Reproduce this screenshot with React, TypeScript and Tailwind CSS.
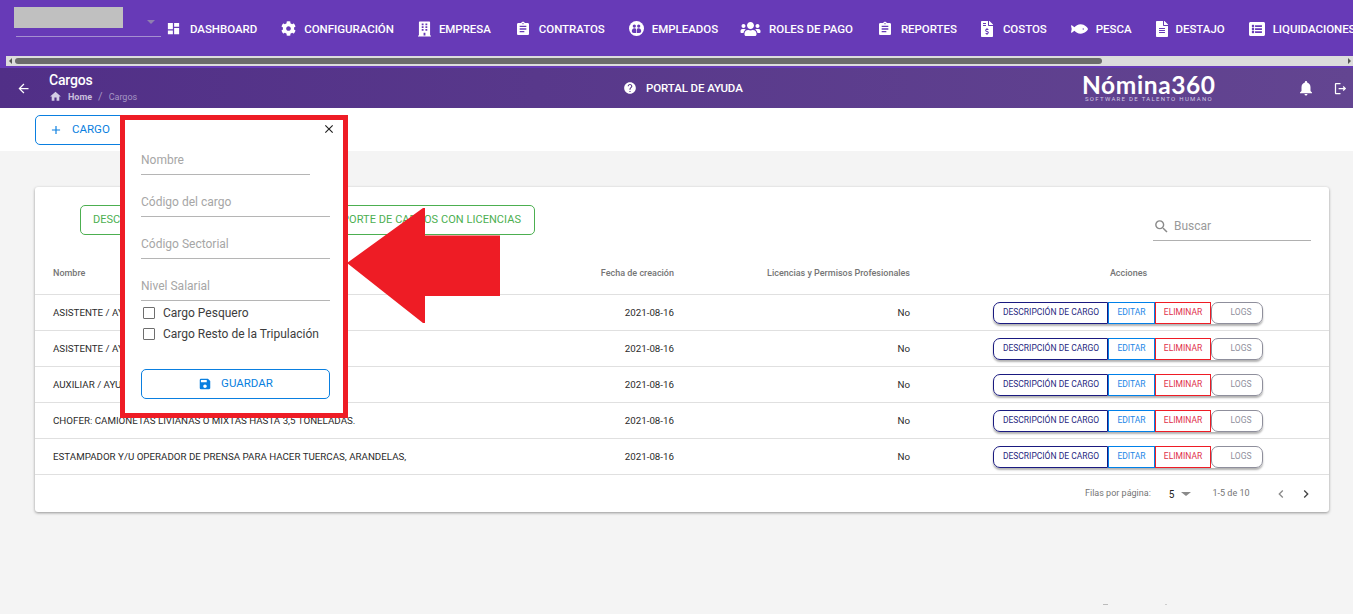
import { FaBuilding, FaCog, FaFileInvoiceDollar, FaFish, FaUsers, FaFileAlt, FaListAlt } from "react-icons/fa";
import {
  MdAdd,
  MdArrowBack,
  MdAssignment,
  MdChevronLeft,
  MdChevronRight,
  MdClose,
  MdDashboard,
  MdHelp,
  MdHome,
  MdNotifications,
  MdOutlineLogout,
  MdSave,
  MdSearch,
} from "react-icons/md";

function PeopleCircle() {
  return (
    <svg className="h-[15px] w-[15px]" viewBox="0 0 24 24">
      <circle cx="12" cy="12" r="12" fill="#fff" />
      <circle cx="8.5" cy="8" r="2.6" fill="#673ab7" />
      <circle cx="15.5" cy="8" r="2.6" fill="#673ab7" />
      <path d="M4.5 16c0-3 1.8-4.6 4-4.6s3 1 3 3V19H7.5C5.5 19 4.5 18 4.5 16z" fill="#673ab7" />
      <path d="M19.5 16c0-3-1.8-4.6-4-4.6s-3 1-3 3V19h4c2 0 3-1 3-3z" fill="#673ab7" />
    </svg>
  );
}

const navItems = [
  { label: "DASHBOARD", icon: <MdDashboard className="h-[15px] w-[15px]" />, gap: "mr-[9px]" },
  { label: "CONFIGURACIÓN", icon: <FaCog className="h-[15px] w-[15px]" />, gap: "mr-2" },
  { label: "EMPRESA", icon: <FaBuilding className="h-[16px] w-[13px]" />, gap: "mr-2" },
  { label: "CONTRATOS", icon: <MdAssignment className="h-[16px] w-[16px]" />, gap: "mr-2" },
  { label: "EMPLEADOS", icon: <PeopleCircle />, gap: "mr-2" },
  { label: "ROLES DE PAGO", icon: <FaUsers className="h-[16px] w-[21px]" />, gap: "-ml-[2px] mr-2" },
  { label: "REPORTES", icon: <MdAssignment className="h-[16px] w-[16px]" />, gap: "mr-2" },
  { label: "COSTOS", icon: <FaFileInvoiceDollar className="h-[16px] w-[12px]" />, gap: "mr-[10px]" },
  { label: "PESCA", icon: <FaFish className="h-[16px] w-[17px]" />, gap: "mr-2" },
  { label: "DESTAJO", icon: <FaFileAlt className="h-[16px] w-[12px]" />, gap: "mr-2" },
  { label: "LIQUIDACIONES", icon: <FaListAlt className="h-[16px] w-[16px]" />, gap: "mr-2" },
];

const rows = [
  "ASISTENTE / AYUDANTE DE COCINA",
  "ASISTENTE / AYUDANTE DE OFICINA",
  "AUXILIAR / AYUDANTE DE TALLER QUE NO REQUIEREN",
  "CHOFER: CAMIONETAS LIVIANAS O MIXTAS HASTA 3,5 TONELADAS.",
  "ESTAMPADOR Y/U OPERADOR DE PRENSA PARA HACER TUERCAS, ARANDELAS,",
];

function Field({ label, short }: { label: string; short?: boolean }) {
  return (
    <div
      className={`flex h-[42px] items-end border-b border-[#b5b5b5] pb-[5px] text-[12px] text-[#a6a6a6] ${
        short ? "w-[169px]" : "w-[189px]"
      }`}
    >
      {label}
    </div>
  );
}

function Check({ label }: { label: string }) {
  return (
    <div className="flex h-[21px] items-center pb-[1px] text-[12px] text-[#3d3d3d]">
      <span className="ml-[2px] mr-[8px] h-[12px] w-[12px] rounded-[1px] border border-[#6e6e6e]" />
      {label}
    </div>
  );
}

function ActionButtons() {
  return (
    <div className="flex h-[22px] rounded-[7px] text-[8.5px] shadow-[0_2px_2px_rgba(0,0,0,0.3)]">
      <span className="flex w-[115px] items-center justify-center rounded-l-[7px] border border-[#1a1a80] pl-[1px] text-[#1f1f80]">
        DESCRIPCIÓN DE CARGO
      </span>
      <span className="flex w-[47px] items-center justify-center border border-[#0080e8] text-[#1c86e6]">EDITAR</span>
      <span className="flex w-[56px] items-center justify-center border border-[#ee1c25] text-[#e0304a]">ELIMINAR</span>
      <span className="flex w-[52px] items-center justify-center rounded-[7px] border border-[#8f8f9c] bg-white pl-[8px] text-[#8f8f9c]">
        LOGS
      </span>
    </div>
  );
}

export default function App() {
  return (
    <div className="relative h-[614px] w-[1353px] overflow-hidden bg-[#f4f4f4] font-['Roboto',sans-serif]">
      {/* top nav */}
      <div className="h-[68px] bg-[#673ab7]">
        <div className="flex h-[56px] items-start overflow-hidden">
          <div className="relative h-[56px] w-[166px] flex-none">
            <div className="absolute left-[14px] top-[7px] h-[21px] w-[109px] bg-[#c0c0c0]" />
            <div className="absolute left-[147px] top-[20px] h-0 w-0 border-x-[4px] border-t-[4px] border-x-transparent border-t-[#8f7fb0]" />
            <div className="absolute left-[16px] top-[36px] h-px w-[145px] bg-[#a58fd0]" />
          </div>
          <div className="flex h-[56px] flex-none items-center gap-[24px] pt-[1px] text-[11.5px] font-medium text-white">
            {navItems.map((item) => (
              <div key={item.label} className="flex items-center whitespace-nowrap tracking-[-0.04px]">
                <span className={`flex items-center ${item.gap}`}>{item.icon}</span>
                <span className="pt-[2px]">{item.label}</span>
              </div>
            ))}
          </div>
        </div>
        <div className="ml-[6px] flex h-[10px] items-center bg-[#dcdcdc]">
          <div className="ml-[3px] h-0 w-0 border-y-[3px] border-r-[3px] border-y-transparent border-r-[#555]" />
          <div className="ml-[3px] h-[6px] w-[1087px] rounded-full bg-[#6b6b6b]" />
          <div className="ml-auto mr-[2px] h-0 w-0 border-y-[3px] border-l-[3px] border-y-transparent border-l-[#555]" />
        </div>
      </div>

      {/* page header */}
      <div className="flex h-[40px] items-center bg-gradient-to-r from-[#512f87] to-[#634591] text-white">
        <MdArrowBack className="ml-[16px] h-[15px] w-[15px]" />
        <div className="ml-[18px] w-[574px]">
          <div className="text-[14px] font-medium leading-[15px] tracking-[-0.2px]">Cargos</div>
          <div className="flex items-center pt-[2px] text-[9px] leading-[12px] text-[#a596c4]">
            <MdHome className="mr-[6px] h-[13px] w-[13px] text-[#d5cce5]" />
            <span className="font-bold text-[#c9bfdc]">Home</span>
            <span className="mx-[6px] text-[11px]">/</span>
            <span>Cargos</span>
          </div>
        </div>
        <MdHelp className="h-[14px] w-[14px]" />
        <span className="ml-[9px] w-[436px] pt-[2px] text-[11.5px] font-medium tracking-[-0.1px]">PORTAL DE AYUDA</span>
        <div className="flex w-[215px] flex-col items-start">
          <span className="font-['Lato',sans-serif] text-[24.5px] font-bold leading-[21px] tracking-[0.6px]">Nómina360</span>
          <span className="ml-[3px] text-[6px] leading-[8px] tracking-[1.3px] text-[#cfc6e0]">SOFTWARE DE TALENTO HUMANO</span>
        </div>
        <MdNotifications className="h-[18px] w-[18px]" />
        <MdOutlineLogout className="ml-[18px] h-[15px] w-[15px]" />
      </div>

      {/* toolbar */}
      <div className="flex h-[43px] items-start bg-white pl-[35px] pt-[7px]">
        <div className="flex h-[30px] w-[100px] items-center rounded-[5px] border border-[#0a7fe0] pl-[13px] text-[11.5px] text-[#0a7fe0]">
          <MdAdd className="mr-[9px] h-[14px] w-[14px]" />
          CARGO
        </div>
      </div>

      {/* table card */}
      <div className="ml-[35px] mt-[36px] h-[325px] w-[1294px] rounded-[3px] bg-white shadow-[0_1px_3px_rgba(0,0,0,0.4)]">
        <div className="flex h-[65px] items-start">
          <div className="ml-[45px] mt-[18px] flex h-[30px] w-[455px] items-center justify-between rounded-[5px] border border-[#4caf50] pl-[12px] pr-[13px] pt-[1px] text-[11px] text-[#4caf50]">
            <span>DESCARGAR</span>
            <span className="tracking-[0.05px]">REPORTE DE CARGOS CON LICENCIAS</span>
          </div>
          <div className="ml-[618px] mt-[25px] flex h-[29px] w-[158px] items-end border-b border-[#b0b0b0] pb-[5px] text-[12px] text-[#9a9a9a]">
            <MdSearch className="mr-[4px] h-[17px] w-[17px] text-[#8a8a8a]" />
            Buscar
          </div>
        </div>
        <div className="grid h-[43px] grid-cols-[455px_200px_236px_403px] items-center border-b border-[#e0e0e0] pt-[2px] text-[9px] font-medium text-[#757575]">
          <span className="pl-[18px]">Nombre</span>
          <span className="pr-[16px] text-right">Fecha de creación</span>
          <span className="pr-[16px] text-right">Licencias y Permisos Profesionales</span>
          <span className="pl-[2px] text-center">Acciones</span>
        </div>
        {rows.map((name) => (
          <div
            key={name}
            className="grid h-[36px] grid-cols-[455px_200px_236px_403px] items-center border-b border-[#e0e0e0] text-[9.75px] text-[#2b2b2b] last:border-b-2"
          >
            <span className="whitespace-nowrap pl-[18px] pt-[1px]">{name}</span>
            <span className="pr-[16px] pt-[1px] text-right">2021-08-16</span>
            <span className="pr-[16px] pt-[1px] text-right">No</span>
            <div className="flex justify-center pl-[1px]">
              <ActionButtons />
            </div>
          </div>
        ))}
        <div className="flex h-[36px] items-center pt-[2px] text-[9px] text-[#757575]">
          <span className="ml-[1050px]">Filas por página:</span>
          <span className="ml-[18px] text-[10px] text-[#222]">5</span>
          <span className="ml-[7px] h-0 w-0 border-x-[5px] border-t-[4px] border-x-transparent border-t-[#8a8a8a]" />
          <span className="ml-[21px]">1-5 de 10</span>
          <MdChevronLeft className="ml-[23px] h-[16px] w-[16px] text-[#8a8a8a]" />
          <MdChevronRight className="ml-[9px] h-[16px] w-[16px] text-[#444]" />
        </div>
      </div>

      {/* annotation: popup with red frame */}
      <div className="absolute left-[120px] top-[115px] h-[303px] w-[228px] border-[5px] border-[#ee1c25] bg-white pl-[16px]">
        <MdClose className="absolute right-[7px] top-[2px] h-[14px] w-[14px] text-[#222]" />
        <div className="flex flex-col pt-[13px]">
          <Field label="Nombre" short />
          <Field label="Código del cargo" />
          <Field label="Código Sectorial" />
          <Field label="Nivel Salarial" />
          <div className="pt-[2px]">
            <Check label="Cargo Pesquero" />
            <Check label="Cargo Resto de la Tripulación" />
          </div>
          <div className="mt-[24px] flex h-[30px] w-[189px] items-center justify-center rounded-[5px] border border-[#0a7fe0] text-[11.5px] text-[#0a7fe0]">
            <MdSave className="mr-[9px] h-[14px] w-[14px]" />
            GUARDAR
          </div>
        </div>
      </div>

      {/* annotation: red arrow */}
      <svg className="absolute left-[345px] top-[205px]" width="156" height="120" viewBox="0 0 156 120">
        <polygon points="2,58 78,3 80,3 80,30.5 155,30.5 155,91 80,91 80,118 78,118" fill="#ee1c25" />
      </svg>

      <div className="absolute left-[1103px] top-[604px] h-px w-[5px] bg-[#bbb]" />
      <div className="absolute left-[1165px] top-[604px] h-px w-[2px] bg-[#ccc]" />
    </div>
  );
}
